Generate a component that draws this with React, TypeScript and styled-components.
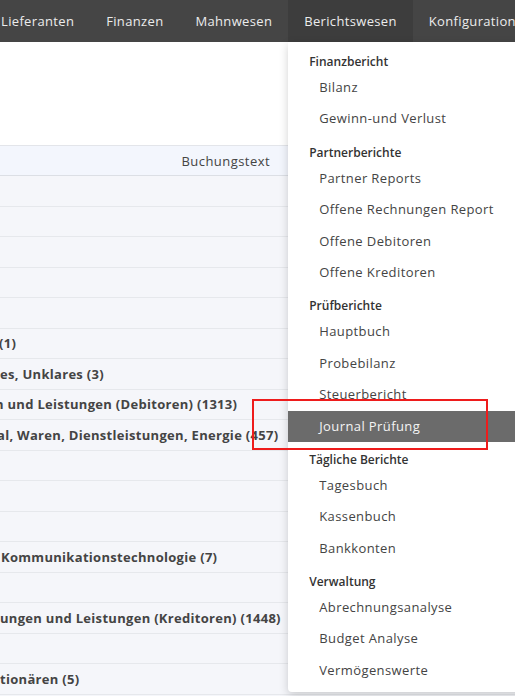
import React from "react";
import styled, { createGlobalStyle } from "styled-components";

const GlobalStyle = createGlobalStyle`
  html, body {
    margin: 0;
    padding: 0;
    width: 515px;
    height: 696px;
    overflow: hidden;
    background: #ffffff;
    font-family: "Open Sans", "Noto Sans", sans-serif;
  }
  * { box-sizing: border-box; }
`;

interface ActiveProps {
  $active?: boolean;
}

const navItems = [
  "Lieferanten",
  "Finanzen",
  "Mahnwesen",
  "Berichtswesen",
  "Konfiguration",
];

type MenuEntry = { label: string; active?: boolean };
const menuGroups: { title: string; items: MenuEntry[] }[] = [
  {
    title: "Finanzbericht",
    items: [{ label: "Bilanz" }, { label: "Gewinn-und Verlust" }],
  },
  {
    title: "Partnerberichte",
    items: [
      { label: "Partner Reports" },
      { label: "Offene Rechnungen Report" },
      { label: "Offene Debitoren" },
      { label: "Offene Kreditoren" },
    ],
  },
  {
    title: "Prüfberichte",
    items: [
      { label: "Hauptbuch" },
      { label: "Probebilanz" },
      { label: "Steuerbericht" },
      { label: "Journal Prüfung", active: true },
    ],
  },
  {
    title: "Tägliche Berichte",
    items: [
      { label: "Tagesbuch" },
      { label: "Kassenbuch" },
      { label: "Bankkonten" },
    ],
  },
  {
    title: "Verwaltung",
    items: [
      { label: "Abrechnungsanalyse" },
      { label: "Budget Analyse" },
      { label: "Vermögenswerte" },
    ],
  },
];

// visible (horizontally scrolled) part of the account group column
const rows: { text: string; cut?: number }[] = [
  { text: "" },
  { text: "" },
  { text: "" },
  { text: "" },
  { text: "" },
  { text: "(1)", cut: 1 },
  { text: "es, Unklares (3)" },
  { text: "n und Leistungen (Debitoren) (1313)", cut: 5 },
  { text: "al, Waren, Dienstleistungen, Energie (457)", cut: 3 },
  { text: "" },
  { text: "" },
  { text: "" },
  { text: "Kommunikationstechnologie (7)", cut: -1 },
  { text: "" },
  { text: "ungen und Leistungen (Kreditoren) (1448)" },
  { text: "" },
  { text: "tionären (5)" },
  { text: "" },
];

const App = () => {
  return (
    <>
      <GlobalStyle />
      <Page>
        <NavBar>
          <NavList>
            {navItems.map((item) => (
              <NavItem key={item} $active={item === "Berichtswesen"}>
                {item}
                {item === "Berichtswesen" && (
                  <Dropdown>
                    {menuGroups.map((group) => (
                      <Group key={group.title}>
                        <GroupTitle>{group.title}</GroupTitle>
                        {group.items.map((entry) => (
                          <MenuItem key={entry.label} $active={entry.active}>
                            {entry.label}
                          </MenuItem>
                        ))}
                      </Group>
                    ))}
                  </Dropdown>
                )}
              </NavItem>
            ))}
          </NavList>
        </NavBar>
        <Content>
          <Table>
            <HeaderRow>
              <HeaderCell>Buchungstext</HeaderCell>
            </HeaderRow>
            {rows.map((row, i) => (
              <Row key={i}>
                <Cell $cut={row.cut ?? 0}>{row.text}</Cell>
              </Row>
            ))}
          </Table>
        </Content>
        <Highlight />
      </Page>
    </>
  );
};

export default App;

const Page = styled.div`
  position: relative;
  width: 515px;
  height: 696px;
  overflow: hidden;
`;

const NavBar = styled.div`
  height: 42px;
  background: #454545;
  position: relative;
  z-index: 5;
`;

const NavList = styled.div`
  display: flex;
  height: 100%;
  margin-left: -15px;
`;

const NavItem = styled.div<ActiveProps>`
  position: relative;
  flex-shrink: 0;
  height: 42px;
  line-height: 42px;
  padding: 0 16px;
  font-size: 13px;
  letter-spacing: 0.34px;
  color: #ececec;
  white-space: nowrap;
  background: ${({ $active }) => ($active ? "#3d3d3d" : "transparent")};
`;

const Dropdown = styled.div`
  position: absolute;
  top: 42px;
  left: 0;
  width: 250px;
  padding: 2px 0 6px;
  background: #ffffff;
  border-radius: 0 0 4px 4px;
  box-shadow: 0 3px 10px rgba(0, 0, 0, 0.18);
  line-height: normal;
  letter-spacing: 0;
`;

const Group = styled.div`
  display: flex;
  flex-direction: column;
`;

const GroupTitle = styled.div`
  padding: 9px 0 1px 21px;
  line-height: 18px;
  font-size: 12px;
  font-weight: 600;
  color: #333333;
`;

const MenuItem = styled.div<ActiveProps>`
  height: 31.4px;
  line-height: 31.4px;
  padding-left: 31px;
  font-size: 13px;
  letter-spacing: 0.4px;
  color: ${({ $active }) => ($active ? "#f4f4f4" : "#444444")};
  background: ${({ $active }) => ($active ? "#6b6b6b" : "transparent")};
  white-space: nowrap;
`;

const Content = styled.div`
  padding-top: 103px;
`;

const Table = styled.div`
  display: flex;
  flex-direction: column;
  border-top: 1px solid #e3e5ea;
`;

const HeaderRow = styled.div`
  display: flex;
  height: 30px;
  align-items: center;
  background: #f3f6fd;
  border-bottom: 1px solid #dcdfe5;
`;

const HeaderCell = styled.div`
  width: 288px;
  padding-right: 18px;
  text-align: right;
  font-size: 13px;
  letter-spacing: 0.45px;
  color: #444444;
`;

const Row = styled.div`
  display: flex;
  align-items: center;
  height: 30.53px;
  background: #f5f6fa;
  border-bottom: 1px solid #e6e8ec;
`;

const Cell = styled.div<{ $cut: number }>`
  margin-left: ${({ $cut }) => -$cut}px;
  font-size: 13px;
  font-weight: 700;
  letter-spacing: 0.3px;
  color: #444444;
  white-space: nowrap;
`;

const Highlight = styled.div`
  position: absolute;
  left: 252px;
  top: 399px;
  width: 236px;
  height: 51px;
  border: 2px solid #ee1c1c;
  z-index: 10;
  pointer-events: none;
`;
